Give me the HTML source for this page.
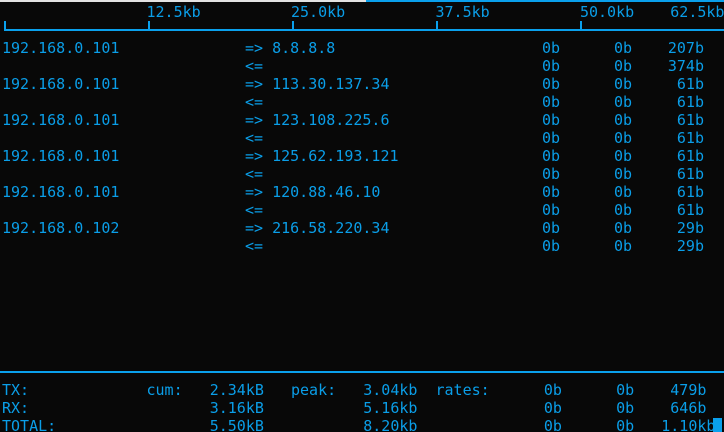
<!DOCTYPE html>
<html><head><meta charset="utf-8"><style>
html,body{margin:0;padding:0;background:#080808;width:724px;height:432px;overflow:hidden;position:relative}
pre{position:absolute;margin:0;font-family:"DejaVu Sans Mono","Liberation Mono",monospace;font-size:15px;line-height:18px;color:#0a9ee8}
.r{text-align:right;width:100px}
.b{position:absolute;background:#0aa0ec}
</style></head><body>
<div style="position:absolute;left:0;top:0;width:366px;height:2px;background:#e2e2e2"></div>
<div class="b" style="left:366px;top:0;width:358px;height:2px"></div>
<div class="b" style="left:4px;top:29px;width:720px;height:2px"></div>
<div class="b" style="left:4px;top:21px;width:2px;height:10px"></div>
<div class="b" style="left:148px;top:21px;width:2px;height:10px"></div>
<div class="b" style="left:292px;top:21px;width:2px;height:10px"></div>
<div class="b" style="left:436px;top:21px;width:2px;height:10px"></div>
<div class="b" style="left:580px;top:21px;width:2px;height:10px"></div>
<div class="b" style="left:0;top:371px;width:724px;height:2px"></div>
<div class="b" style="left:713px;top:418px;width:9px;height:14px"></div>
<pre style="top:3px;left:2px">                12.5kb          25.0kb          37.5kb          50.0kb    62.5kb</pre>
<pre style="top:39px;left:2px">192.168.0.101

192.168.0.101

192.168.0.101

192.168.0.101

192.168.0.101

192.168.0.102</pre>
<pre style="top:39px;left:245px">=> 8.8.8.8
&lt;=
=> 113.30.137.34
&lt;=
=> 123.108.225.6
&lt;=
=> 125.62.193.121
&lt;=
=> 120.88.46.10
&lt;=
=> 216.58.220.34
&lt;=</pre>
<pre class="r" style="top:39px;left:460px">0b
0b
0b
0b
0b
0b
0b
0b
0b
0b
0b
0b</pre>
<pre class="r" style="top:39px;left:532px">0b
0b
0b
0b
0b
0b
0b
0b
0b
0b
0b
0b</pre>
<pre class="r" style="top:39px;left:604px">207b
374b
61b
61b
61b
61b
61b
61b
61b
61b
29b
29b</pre>
<pre style="top:381px;left:2px">TX:             cum:   2.34kB   peak:   3.04kb  rates:      0b      0b    479b
RX:                    3.16kB           5.16kb              0b      0b    646b
TOTAL:                 5.50kB           8.20kb              0b      0b   1.10kb</pre>
</body></html>
